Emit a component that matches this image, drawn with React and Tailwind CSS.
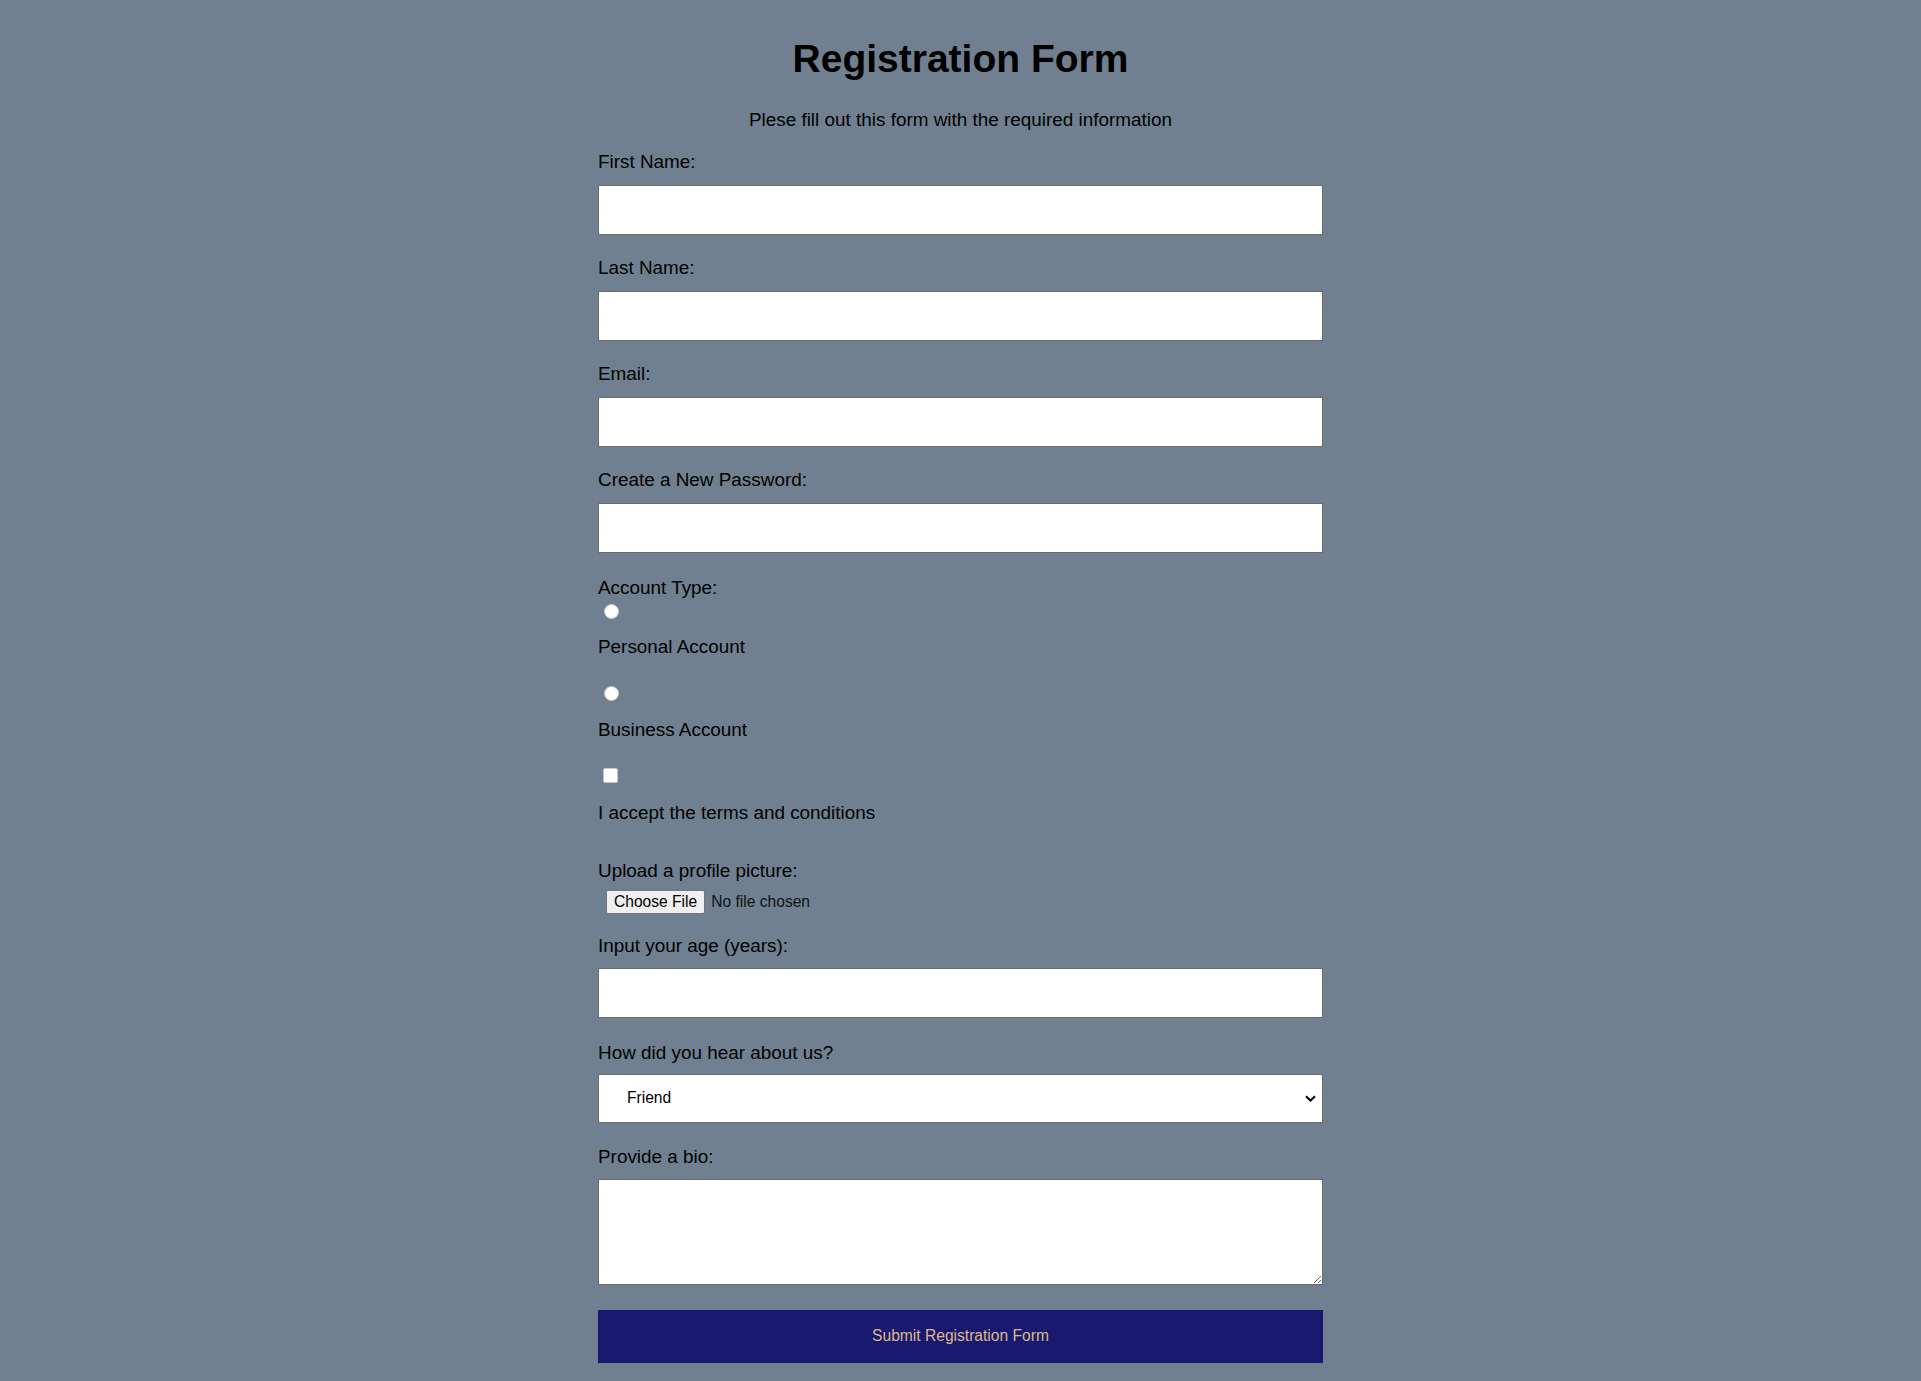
import { useState } from 'react'

const labelCls = 'block text-[18.9px] leading-[21.5px] text-black'
const fieldCls = 'block w-full h-[50px] bg-white border border-[#6b6b6b] outline-none px-2 text-[15.6px]'

export default function App() {
  const [referral, setReferral] = useState('friend')

  return (
    <div className="min-h-screen bg-[#708090] font-['Liberation_Sans',Arial,sans-serif] text-black">
      <form
        className="w-[725px] mx-auto pt-[37px] flex flex-col"
        onSubmit={(e) => e.preventDefault()}
      >
        <h1 className="text-center text-[39px] font-bold leading-[44px]">Registration Form</h1>
        <p className="mt-[28px] text-center text-[18.9px] leading-[21.5px]">
          Plese fill out this form with the required information
        </p>

        <label htmlFor="first-name" className={`${labelCls} mt-[20.5px] mb-[12px]`}>First Name:</label>
        <input id="first-name" type="text" className={fieldCls} />

        <label htmlFor="last-name" className={`${labelCls} mt-[22.5px] mb-[12px]`}>Last Name:</label>
        <input id="last-name" type="text" className={fieldCls} />

        <label htmlFor="email" className={`${labelCls} mt-[22.5px] mb-[12px]`}>Email:</label>
        <input id="email" type="email" className={fieldCls} />

        <label htmlFor="new-password" className={`${labelCls} mt-[22.5px] mb-[12px]`}>Create a New Password:</label>
        <input id="new-password" type="password" className={fieldCls} />

        <span className={`${labelCls} mt-[24px]`}>Account Type:</span>
        <input
          id="personal"
          type="radio"
          name="account-type"
          className="self-start appearance-none w-[15px] h-[15px] rounded-full bg-white border border-[#c8c8c8] mt-[6px] ml-[6px] checked:bg-[#1a73e8]"
        />
        <label htmlFor="personal" className={`${labelCls} mt-[17px]`}>Personal Account</label>
        <input
          id="business"
          type="radio"
          name="account-type"
          className="self-start appearance-none w-[15px] h-[15px] rounded-full bg-white border border-[#c8c8c8] mt-[28.5px] ml-[6px] checked:bg-[#1a73e8]"
        />
        <label htmlFor="business" className={`${labelCls} mt-[18px]`}>Business Account</label>

        <input
          id="terms"
          type="checkbox"
          className="self-start appearance-none w-[15px] h-[15px] rounded-[2px] bg-white border border-[#c8c8c8] mt-[27.5px] ml-[4.5px] checked:bg-[#1a73e8]"
        />
        <label htmlFor="terms" className={`${labelCls} mt-[18.5px]`}>I accept the terms and conditions</label>

        <label htmlFor="profile-picture" className={`${labelCls} mt-[36.5px]`}>Upload a profile picture:</label>
        <input
          id="profile-picture"
          type="file"
          className="self-start mt-[8.5px] ml-[8px] h-[24px] text-[15.6px] leading-[18px] text-[#111] file:h-[24px] file:px-[7px] file:mr-[6px] file:bg-[#efefef] file:text-black file:border file:border-solid file:border-[#767676] file:rounded-[2px] file:font-['Liberation_Sans',Arial,sans-serif] file:text-[15.6px]"
        />

        <label htmlFor="age" className={`${labelCls} mt-[21.5px] mb-[11.5px]`}>Input your age (years):</label>
        <input id="age" type="number" min="13" max="120" className={fieldCls} />

        <label htmlFor="referrer" className={`${labelCls} mt-[23.5px] mb-[10.5px]`}>How did you hear about us?</label>
        <div className="relative">
          <select
            id="referrer"
            value={referral}
            onChange={(e) => setReferral(e.target.value)}
            className="block w-full h-[49px] appearance-none bg-white border border-[#6b6b6b] outline-none pl-[28px] text-[15.6px] text-black"
          >
            <option value="friend">Friend</option>
            <option value="search">Search Engine</option>
            <option value="social">Social Media</option>
            <option value="other">Other</option>
          </select>
          <svg
            className="absolute right-[7px] top-[21px] pointer-events-none"
            width="11"
            height="7"
            viewBox="0 0 11 7"
            fill="none"
          >
            <path d="M1 1.2 L5.5 5.5 L10 1.2" stroke="#000" strokeWidth="2" />
          </svg>
        </div>

        <label htmlFor="bio" className={`${labelCls} mt-[23px] mb-[12px]`}>Provide a bio:</label>
        <textarea
          id="bio"
          className="block w-full h-[105.5px] bg-white border border-[#6b6b6b] outline-none p-2 text-[15.6px]"
        />

        <button
          type="submit"
          className="mt-[25px] h-[53px] bg-[#191970] text-[#deb887] text-[15.6px] font-['Liberation_Sans',Arial,sans-serif]"
        >
          Submit Registration Form
        </button>
      </form>
    </div>
  )
}
